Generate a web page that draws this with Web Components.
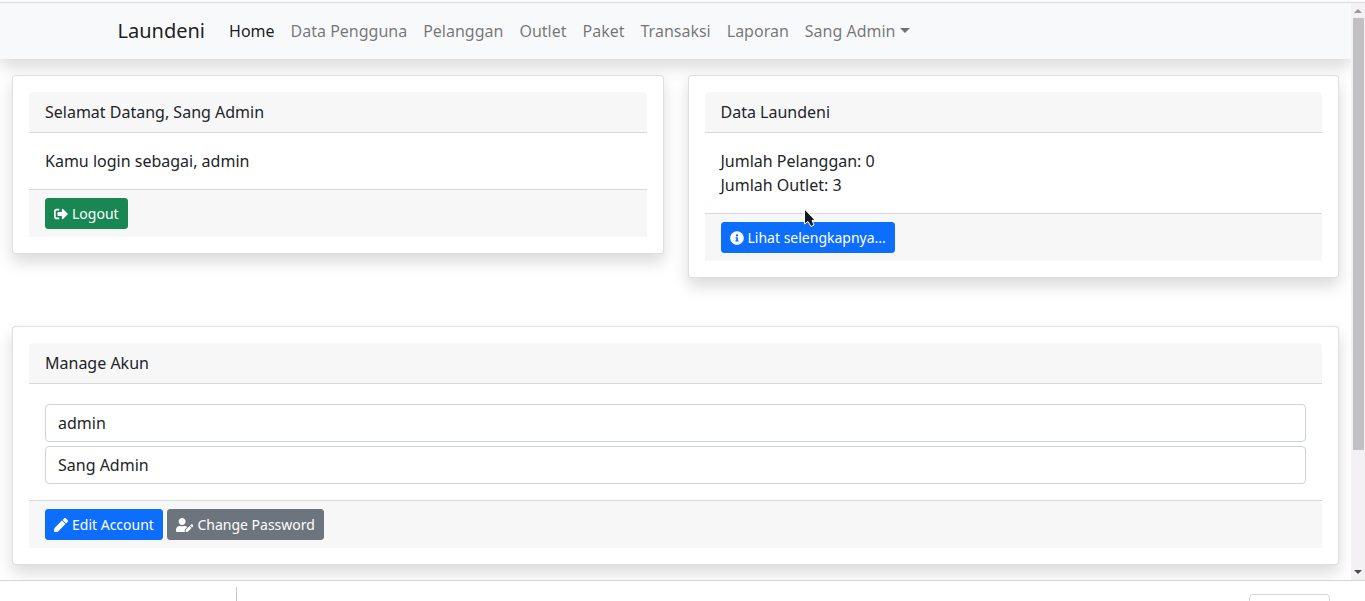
<!DOCTYPE html>
<html lang="id">
<head>
<meta charset="utf-8">
<meta name="viewport" content="width=device-width, initial-scale=1">
<title>Laundeni</title>
<style>
  body { margin: 0; background: #fff; color: #212529; font: 16px/24px "Noto Sans", sans-serif; }
</style>
</head>
<body>
<app-window>
  <nav-bar brand="Laundeni">
    <nav-link active>Home</nav-link>
    <nav-link>Data Pengguna</nav-link>
    <nav-link>Pelanggan</nav-link>
    <nav-link>Outlet</nav-link>
    <nav-link>Paket</nav-link>
    <nav-link>Transaksi</nav-link>
    <nav-link>Laporan</nav-link>
    <nav-link dropdown>Sang Admin</nav-link>
  </nav-bar>
  <card-grid>
    <info-card>
      <span slot="header">Selamat Datang, Sang Admin</span>
      <div>Kamu login sebagai, admin</div>
      <icon-button slot="footer" icon="logout" variant="success">Logout</icon-button>
    </info-card>
    <info-card>
      <span slot="header">Data Laundeni</span>
      <div>Jumlah Pelanggan: 0</div>
      <div>Jumlah Outlet: 3</div>
      <icon-button slot="footer" icon="info" variant="primary">Lihat selengkapnya...</icon-button>
    </info-card>
    <info-card wide>
      <span slot="header">Manage Akun</span>
      <text-field label="Username" value="admin"></text-field>
      <text-field label="Nama" value="Sang Admin"></text-field>
      <icon-button slot="footer" icon="pen" variant="primary">Edit Account</icon-button>
      <icon-button slot="footer" icon="user" variant="secondary">Change Password</icon-button>
    </info-card>
  </card-grid>
  <scroll-rail slot="rail"></scroll-rail>
  <download-shelf slot="shelf"></download-shelf>
  <mouse-pointer slot="pointer"></mouse-pointer>
</app-window>

<script>
class Base extends HTMLElement {
  render(html) {
    const t = document.createElement('template');
    t.innerHTML = html;
    this.attachShadow({ mode: 'open' }).append(t.content.cloneNode(true));
  }
}

customElements.define('app-window', class extends Base {
  connectedCallback() {
    this.render(`<style>
      :host { display: flex; flex-direction: column; height: 100vh; position: relative; overflow: hidden; }
      .top { flex: none; height: 2px; background: #fbfbfb; border-bottom: 1px solid #dcdcdd; }
      .view { flex: 1; min-height: 0; display: flex; }
      main { flex: 1; min-width: 0; overflow: auto; scrollbar-width: none; }
    </style>
    <div class="top"></div>
    <div class="view"><main><slot></slot></main><slot name="rail"></slot></div>
    <slot name="shelf"></slot><slot name="pointer"></slot>`);
  }
});

customElements.define('nav-bar', class extends Base {
  connectedCallback() {
    this.render(`<style>
      :host { display: block; padding: 8px 0; background: #f8f9fa; box-shadow: 0 8px 16px rgba(0,0,0,.15); }
      nav { display: flex; align-items: center; max-width: 1116px; margin: 0 auto; padding: 0 12px; }
      .brand { margin-right: 16px; padding: 4px 0; font-size: 20px; line-height: 32px; color: rgba(0,0,0,.9); text-decoration: none; }
    </style>
    <nav><a class="brand" href="#">${this.getAttribute('brand')}</a><slot></slot></nav>`);
  }
});

customElements.define('nav-link', class extends Base {
  connectedCallback() {
    this.render(`<style>
      :host { display: block; }
      a { display: block; padding: 8px; color: rgba(0,0,0,.55); text-decoration: none; white-space: nowrap; }
      :host([active]) a { color: rgba(0,0,0,.9); }
      :host([dropdown]) a::after { content: ""; display: inline-block; margin-left: 4px; vertical-align: 4px;
        border: 5px solid transparent; border-top-color: currentColor; border-bottom: 0; }
    </style><a href="#"><slot></slot></a>`);
  }
});

customElements.define('card-grid', class extends Base {
  connectedCallback() {
    this.render(`<style>
      :host { display: grid; grid-template-columns: 1fr 1fr; align-items: start; gap: 48px 24px; padding: 16px 12px; }
    </style><slot></slot>`);
  }
});

customElements.define('info-card', class extends Base {
  connectedCallback() {
    this.render(`<style>
      :host { display: block; position: relative; padding: 16px; border: 1px solid rgba(0,0,0,.125); border-radius: 4px;
        background: #fff; background-clip: border-box; box-shadow: 0 8px 16px rgba(0,0,0,.15); }
      :host([wide]) { grid-column: 1 / -1; }
      header { padding: 8px 16px; background: #f7f7f8; border-bottom: 1px solid #d8d8da; border-radius: 4px 4px 0 0; }
      .body { padding: 16px; }
      :host([wide]) .body { display: grid; gap: 4px; padding-top: 20px; }
      footer { display: flex; gap: 4px; padding: 8px 16px; background: #f7f7f8; border-top: 1px solid #d8d8da; }
    </style>
    <header><slot name="header"></slot></header>
    <div class="body"><slot></slot></div>
    <footer><slot name="footer"></slot></footer>`);
  }
});

customElements.define('text-field', class extends Base {
  connectedCallback() {
    this.render(`<style>
      :host { display: block; }
      input { display: block; box-sizing: border-box; width: 100%; height: 38px; margin: 0; padding: 6px 12px; border: 1px solid #ced4da;
        border-radius: 4px; background: #fff; color: #212529; font: inherit; }
    </style><input type="text" aria-label="${this.getAttribute('label')}" value="${this.getAttribute('value')}">`);
  }
});

const ICONS = {
  logout: [512, 'M497 273L329 441c-15 15-41 4.500-41-17v-96H152c-13.300 0-24-10.700-24-24v-96c0-13.300 10.700-24 24-24h136V88c0-21.400 25.900-32 41-17l168 168c9.300 9.400 9.300 24.600 0 34zM192 436v-40c0-6.600-5.400-12-12-12H96c-17.700 0-32-14.300-32-32V160c0-17.700 14.300-32 32-32h84c6.600 0 12-5.400 12-12V76c0-6.600-5.400-12-12-12H96c-53 0-96 43-96 96v192c0 53 43 96 96 96h84c6.600 0 12-5.400 12-12z'],
  info: [512, 'M256 8C119.043 8 8 119.083 8 256c0 136.997 111.043 248 248 248s248-111.003 248-248C504 119.083 392.957 8 256 8zm0 110c23.196 0 42 18.804 42 42s-18.804 42-42 42-42-18.804-42-42 18.804-42 42-42zm56 254c0 6.627-5.373 12-12 12h-88c-6.627 0-12-5.373-12-12v-24c0-6.627 5.373-12 12-12h12v-64h-12c-6.627 0-12-5.373-12-12v-24c0-6.627 5.373-12 12-12h64c6.627 0 12 5.373 12 12v100h12c6.627 0 12 5.373 12 12v24z'],
  pen: [512, 'M290.740 93.240l128.020 128.020-277.990 277.990-114.140 12.600C11.350 513.540-1.560 500.620.140 485.340l12.700-114.220 277.900-277.880zm207.200-19.060l-60.110-60.110c-18.750-18.750-49.160-18.750-67.910 0l-56.550 56.550 128.020 128.020 56.550-56.550c18.750-18.760 18.750-49.160 0-67.910z'],
  user: [640, 'M224 256c70.700 0 128-57.300 128-128S294.700 0 224 0 96 57.300 96 128s57.300 128 128 128zm89.600 32h-16.700c-22.200 10.200-46.900 16-72.900 16s-50.600-5.800-72.900-16h-16.700C60.200 288 0 348.200 0 422.400V464c0 26.500 21.500 48 48 48h274.900c-2.400-6.800-3.400-14-2.600-21.300l6.800-60.900 1.200-11.100 7.900-7.900 77.300-77.300c-24.500-27.700-60-45.500-99.900-45.500zm45.300 145.300l-6.800 61c-1.100 10.200 7.500 18.800 17.600 17.600l60.900-6.800 137.900-137.900-71.700-71.700-137.900 137.800zM633 268.900L595.100 231c-9.300-9.300-24.500-9.300-33.800 0l-37.800 37.800-4.100 4.100 71.800 71.700 41.800-41.800c9.300-9.400 9.300-24.500 0-33.900z']
};

customElements.define('icon-button', class extends Base {
  connectedCallback() {
    const [w, d] = ICONS[this.getAttribute('icon')];
    this.render(`<style>
      :host { display: block; --fill: #0d6efd; }
      :host([variant=success]) { --fill: #198754; }
      :host([variant=secondary]) { --fill: #6c757d; }
      button { display: flex; align-items: center; gap: 4px; margin: 0; padding: 4px 8px; border: 1px solid var(--fill); border-radius: 3px;
        background: var(--fill); color: #fff; font-family: inherit; font-size: 14px; line-height: 21px; white-space: nowrap; cursor: pointer; }
      svg { display: block; height: 14px; fill: currentColor; }
    </style>
    <button type="button"><svg viewBox="0 0 ${w} 512" aria-hidden="true"><path d="${d}"/></svg><span><slot></slot></span></button>`);
  }
});

customElements.define('scroll-rail', class extends Base {
  connectedCallback() {
    this.render(`<style>
      :host { display: flex; flex-direction: column; align-items: center; flex: none; width: 14px; background: #f3f1f4; }
      svg { flex: none; display: block; width: 14px; height: 15px; }
      .track { flex: 1; align-self: stretch; padding: 0 1px 0 2px; }
      .thumb { height: 79%; background: #c1c0c2; }
    </style>
    <svg viewBox="0 0 14 15"><path d="M3 10l4-4 4 4z" fill="#989898"/></svg>
    <div class="track"><div class="thumb"></div></div>
    <svg viewBox="0 0 14 15"><path d="M3 5h8l-4 4z" fill="#4a4a4a"/></svg>`);
  }
});

customElements.define('download-shelf', class extends Base {
  connectedCallback() {
    this.render(`<style>
      :host { display: flex; justify-content: space-between; flex: none; height: 20px; overflow: hidden; border-top: 1px solid #d5d5d6; background: #fff; }
      .item { width: 236px; margin-top: 6px; border-right: 1px solid #c8c8c9; }
      button { box-sizing: border-box; width: 81px; height: 28px; margin: 13px 35px 0 0; border: 1px solid #d5d5d8; border-radius: 4px; background: #fff; }
    </style>
    <div class="item"></div><button type="button" aria-label="Show all"></button>`);
  }
});

customElements.define('mouse-pointer', class extends Base {
  connectedCallback() {
    this.render(`<style>
      :host { display: block; position: absolute; left: 803px; top: 207px; pointer-events: none; }
      svg { display: block; width: 14px; height: 22px; }
    </style>
    <svg viewBox="0 0 14 22"><path d="M1.500 2v15l3.500-2.500 3 5 3-1.500-2-4.500 3-.5z" fill="#17171f" stroke="#fff" stroke-width="1"/></svg>`);
  }
});
</script>
</body>
</html>
